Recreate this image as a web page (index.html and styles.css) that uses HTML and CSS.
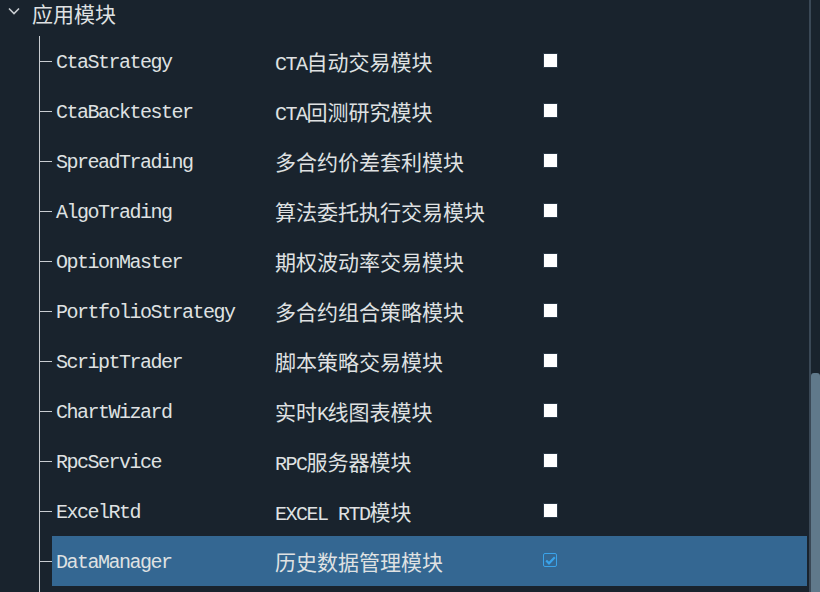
FILE: index.html
```html
<!DOCTYPE html>
<html lang="zh">
<head>
<meta charset="utf-8">
<title>应用模块</title>
<link rel="stylesheet" href="styles.css">
</head>
<body>
<div class="view">
  <div class="tree">
    <div class="header">
      <span class="chev"><svg width="12" height="8" viewBox="0 0 12 8"><polyline points="1,1.5 6,6.5 11,1.5" fill="none" stroke="#c9cdd1" stroke-width="1.6"/></svg></span>
      <span class="cjk">应用模块</span>
    </div>
    <div class="children">
      <div class="row"><span class="branch"></span><div class="item"><span class="name">CtaStrategy</span><span class="desc">CTA<span class="cjk">自动交易模块</span></span><span class="box"></span></div></div>
      <div class="row"><span class="branch"></span><div class="item"><span class="name">CtaBacktester</span><span class="desc">CTA<span class="cjk">回测研究模块</span></span><span class="box"></span></div></div>
      <div class="row"><span class="branch"></span><div class="item"><span class="name">SpreadTrading</span><span class="desc"><span class="cjk">多合约价差套利模块</span></span><span class="box"></span></div></div>
      <div class="row"><span class="branch"></span><div class="item"><span class="name">AlgoTrading</span><span class="desc"><span class="cjk">算法委托执行交易模块</span></span><span class="box"></span></div></div>
      <div class="row"><span class="branch"></span><div class="item"><span class="name">OptionMaster</span><span class="desc"><span class="cjk">期权波动率交易模块</span></span><span class="box"></span></div></div>
      <div class="row"><span class="branch"></span><div class="item"><span class="name">PortfolioStrategy</span><span class="desc"><span class="cjk">多合约组合策略模块</span></span><span class="box"></span></div></div>
      <div class="row"><span class="branch"></span><div class="item"><span class="name">ScriptTrader</span><span class="desc"><span class="cjk">脚本策略交易模块</span></span><span class="box"></span></div></div>
      <div class="row"><span class="branch"></span><div class="item"><span class="name">ChartWizard</span><span class="desc"><span class="cjk">实时</span>K<span class="cjk">线图表模块</span></span><span class="box"></span></div></div>
      <div class="row"><span class="branch"></span><div class="item"><span class="name">RpcService</span><span class="desc">RPC<span class="cjk">服务器模块</span></span><span class="box"></span></div></div>
      <div class="row"><span class="branch"></span><div class="item"><span class="name">ExcelRtd</span><span class="desc">EXCEL RTD<span class="cjk">模块</span></span><span class="box"></span></div></div>
      <div class="row"><span class="branch"></span><div class="item selected"><span class="name">DataManager</span><span class="desc"><span class="cjk">历史数据管理模块</span></span><span class="box checked"><svg width="11" height="9" viewBox="0 0 11 9"><polyline points="1.2,4.4 4,7.3 9.8,1.2" fill="none" stroke="#3aa3ea" stroke-width="2.2"/></svg></span></div></div>
    </div>
  </div>
  <div class="scrollbar"><div class="handle"></div></div>
</div>
</body>
</html>
```

FILE: styles.css
```css
html, body {
  margin: 0;
  padding: 0;
  background: #19232d;
}
.view {
  width: 820px;
  height: 592px;
  overflow: hidden;
  display: flex;
  background: #19232d;
  color: #dfe1e2;
  font-family: "Liberation Mono", "Noto Sans CJK SC", monospace;
  font-size: 20px;
  letter-spacing: -1.5px;
}
.tree {
  width: 809px;
  flex: none;
}
.cjk {
  font-family: "Noto Sans CJK SC", sans-serif;
  font-size: 21px;
  letter-spacing: 0;
}
.header {
  height: 36px;
  box-sizing: border-box;
  padding: 0 0 10px 8px;
  display: flex;
  align-items: center;
  line-height: 26px;
}
.chev {
  width: 24px;
  display: flex;
  align-items: center;
  padding-bottom: 4px;
}
.children {
  margin-left: 39px;
  border-left: 1px solid #c8ccd0;
  padding-bottom: 10px;
}
.row {
  height: 50px;
  display: flex;
  align-items: center;
}
.branch {
  width: 12px;
  height: 1px;
  background: #c8ccd0;
  flex: none;
}
.item {
  width: 755px;
  height: 50px;
  box-sizing: border-box;
  padding-left: 4px;
  display: flex;
  align-items: center;
  line-height: 26px;
  padding-top: 4px;
}
.item.selected {
  background: #346792;
}
.name {
  width: 219px;
  flex: none;
}
.desc {
  width: 268px;
  flex: none;
  white-space: pre;
}
.box {
  width: 13px;
  height: 13px;
  background: #ffffff;
  border: 1px solid #2b3947;
  flex: none;
  margin-top: -6px;
  display: flex;
  align-items: center;
  justify-content: center;
}
.box.checked {
  background: transparent;
  border: 1.5px solid #3aa3ea;
  border-radius: 2px;
  width: 12px;
  height: 12px;
}
.scrollbar {
  width: 9px;
  flex: none;
  border-left: 2px solid #3a4856;
  background: #19232d;
  display: flex;
  flex-direction: column;
}
.handle {
  margin-top: 373px;
  flex: 1;
  background: #60798b;
  border-radius: 3px 3px 0 0;
}
```
